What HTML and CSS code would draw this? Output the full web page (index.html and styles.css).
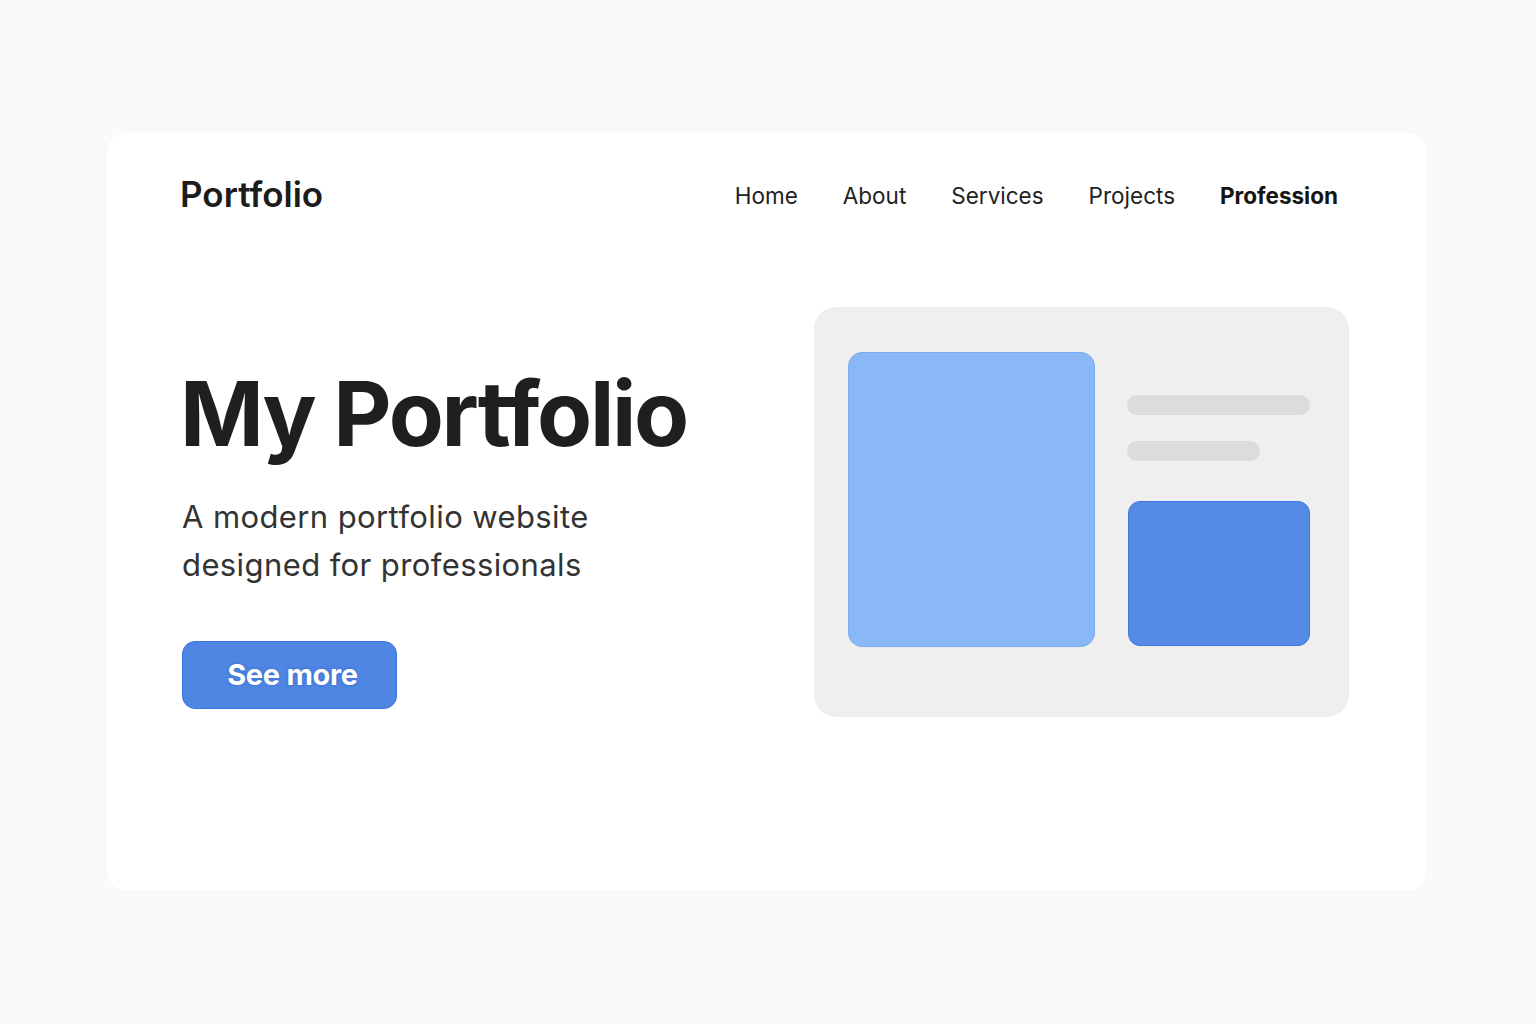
FILE: index.html
```html
<!DOCTYPE html>
<html lang="en">
<head>
<meta charset="utf-8">
<title>Portfolio</title>
<link rel="stylesheet" href="styles.css">
</head>
<body>
<div class="page">
  <div class="card">
    <header class="header">
      <div class="logo">Portfolio</div>
      <nav class="nav">
        <a class="nav-link">Home</a>
        <a class="nav-link">About</a>
        <a class="nav-link">Services</a>
        <a class="nav-link">Projects</a>
        <a class="nav-link active">Profession</a>
      </nav>
    </header>
    <section class="hero">
      <div class="hero-text">
        <h1 class="title">My Portfolio</h1>
        <p class="subtitle">A modern portfolio website<br>designed for professionals</p>
        <button class="btn">See more</button>
      </div>
      <div class="panel">
        <div class="panel-main"></div>
        <div class="panel-side">
          <div class="bar bar-long"></div>
          <div class="bar bar-short"></div>
          <div class="panel-box"></div>
        </div>
      </div>
    </section>
  </div>
</div>
</body>
</html>
```
FILE: styles.css
```css
* { box-sizing: border-box; }
html, body { margin: 0; padding: 0; }
body {
  background: #fafafa;
  font-family: Inter, "Noto Sans", "Liberation Sans", sans-serif;
  font-variant-ligatures: none;
  font-feature-settings: "liga" 0, "calt" 0;
  color: #1f1f1f;
  width: 1536px;
  height: 1024px;
  overflow: hidden;
}
.page {
  padding: 132px 0 0 107px;
}
.card {
  width: 1319px;
  height: 759px;
  background: #ffffff;
  border-radius: 20px;
  box-shadow: 0 0 12px rgba(0,0,0,0.015);
  padding: 40px 88px 0 73px;
}
.header {
  display: flex;
  align-items: center;
  justify-content: space-between;
  height: 44px;
}
.logo {
  font-size: 35px;
  font-weight: 600;
  color: #1c1c1c;
  letter-spacing: 0;
}
.nav {
  display: flex;
  gap: 45px;
  align-items: center;
  padding-top: 2px;
}
.nav-link {
  font-size: 22.5px;
  color: #222;
  font-weight: 400;
}
.nav-link.active {
  font-weight: 700;
  color: #141414;
}
.hero {
  display: flex;
  justify-content: space-between;
  margin-top: 91px;
  margin-right: -11px;
}
.hero-text {
  padding-top: 57px;
}
.title {
  margin: 0;
  font-size: 90px;
  line-height: 99px;
  font-weight: 700;
  letter-spacing: -2.3px;
  color: #1f1f1f;
}
.subtitle {
  margin: 30px 0 0 2px;
  font-size: 31px;
  line-height: 48px;
  color: #333;
  font-weight: 400;
  letter-spacing: 0.4px;
}
.btn {
  margin: 52px 0 0 2px;
  width: 215px;
  height: 68px;
  border-radius: 13px;
  background: #4f86e3;
  border: 1px solid #3d74da;
  color: #fff;
  font-family: Inter, "Noto Sans", sans-serif;
  font-variant-ligatures: none;
  font-size: 29px;
  font-weight: 700;
  letter-spacing: -0.3px;
  text-shadow: 0 0 3px rgba(30,70,160,0.5);
  padding: 0 0 2px 6px;
}
.panel {
  width: 535px;
  height: 410px;
  background: #efefef;
  border-radius: 22px;
  padding: 45px 39px 70px 34px;
  display: flex;
  gap: 32px;
}
.panel-main {
  width: 247px;
  height: 295px;
  background: #8ab7f6;
  border: 1px solid #7cadf2;
  border-radius: 14px;
}
.panel-side {
  flex: 1;
  display: flex;
  flex-direction: column;
  padding-top: 43px;
}
.bar {
  height: 20px;
  border-radius: 10px;
  background: #dcdcdc;
}
.bar-long { width: 183px; }
.bar-short { width: 133px; margin-top: 26px; }
.panel-box {
  margin-top: 40px;
  width: 182px;
  height: 145px;
  margin-left: 1px;
  background: #558be4;
  border: 1px solid #3f78e0;
  border-radius: 12px;
}
```
